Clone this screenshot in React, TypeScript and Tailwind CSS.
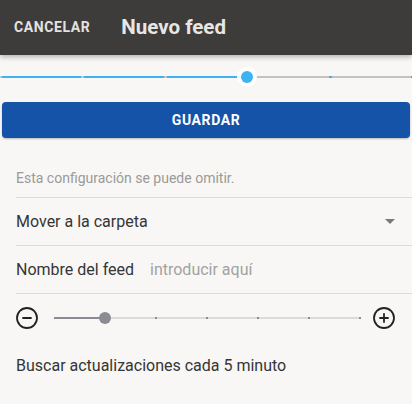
import React from 'react';
import { CircleMinus, CirclePlus } from 'lucide-react';

const steps = [0, 82, 165, 247, 330, 412];
const sliderTicks = [156, 207, 258, 309, 360];

function Stepper() {
  const current = 247;
  return (
    <div className="relative mt-[11px] h-[22px]">
      <div className="absolute left-0 right-0 top-[10px] h-[2px] bg-[#c4c2c0]" />
      <div className="absolute left-0 top-[10px] h-[2px] bg-[#3db3f3]" style={{ width: current }} />
      {steps.map((x) => (
        <div
          key={x}
          className={`absolute top-[10px] h-[2px] w-[3px] ${x < current ? 'bg-[#c4c2c0]' : 'bg-[#3db3f3]'}`}
          style={{ left: x - 1 }}
        />
      ))}
      <div className="absolute top-[1px] left-[237px] w-[20px] h-[20px] rounded-full bg-white flex items-center justify-center">
        <div className="w-[12px] h-[12px] rounded-full bg-[#3db3f3]" />
      </div>
    </div>
  );
}

function IntervalSlider() {
  return (
    <div className="h-[48px] flex items-center pl-[15px] pr-[16px]">
      <CircleMinus className="w-6 h-6 text-[#222]" strokeWidth={1.8} />
      <div className="relative ml-[15px] w-[306px] h-[12px]">
        <div className="absolute left-0 right-0 top-[5px] h-[2px] bg-[#dcdbda]" />
        <div className="absolute left-0 top-[5px] h-[2px] w-[51px] bg-[#8b8c93]" />
        {sliderTicks.map((x) => (
          <div key={x} className="absolute top-[5px] w-[2px] h-[2px] bg-[#8b8c93]" style={{ left: x - 54 - 1 }} />
        ))}
        <div className="absolute top-0 left-[45px] w-[12px] h-[12px] rounded-full bg-[#8b8c93]" />
      </div>
      <CirclePlus className="ml-auto w-6 h-6 text-[#222]" strokeWidth={1.8} />
    </div>
  );
}

export default function App() {
  return (
    <div className="w-[412px] h-[404px] bg-[#f8f7f5] overflow-hidden" style={{ fontFamily: 'Roboto, "Noto Sans", sans-serif' }}>
      <header className="relative h-[55px] bg-[#3d3c3a] flex items-center px-[14px] shadow-[0_2px_5px_rgba(0,0,0,0.28)]">
        <span className="text-[14px] font-bold tracking-[0.6px] text-[#e4e2e0]">CANCELAR</span>
        <h1 className="ml-[31px] text-[20.5px] font-bold text-[#e8e6e4]">Nuevo feed</h1>
      </header>

      <Stepper />

      <div className="mt-[14px] px-[2px]">
        <button className="w-full h-[36px] rounded-[4px] bg-[#1453a8] text-white text-[14px] font-bold tracking-[0.6px] shadow-[0_1px_2px_rgba(0,0,0,0.25)]">
          GUARDAR
        </button>
      </div>

      <div className="pl-4">
        <div className="h-[60px] flex items-end pb-[10px] border-b border-[#dcdbd9]">
          <span className="text-[14px] leading-[18px] text-[#9b9a98]">Esta configuración se puede omitir.</span>
        </div>
        <div className="h-[48px] flex items-center justify-between pr-[17px] border-b border-[#dcdbd9]">
          <span className="text-[16px] text-[#353535]">Mover a la carpeta</span>
          <span className="w-0 h-0 border-l-[5px] border-r-[5px] border-t-[5px] border-l-transparent border-r-transparent border-t-[#7a7a7a]" />
        </div>
        <div className="h-[48px] flex items-center border-b border-[#dcdbd9]">
          <span className="text-[16px] text-[#353535]">Nombre del feed</span>
          <input
            className="ml-[16px] flex-1 bg-transparent outline-none text-[16px] text-[#353535] placeholder:text-[#a3a2a0]"
            placeholder="introducir aquí"
          />
        </div>
      </div>

      <IntervalSlider />

      <div className="h-[48px] flex items-center px-4">
        <span className="text-[16px] text-[#353535]">Buscar actualizaciones cada 5 minuto</span>
      </div>
    </div>
  );
}
